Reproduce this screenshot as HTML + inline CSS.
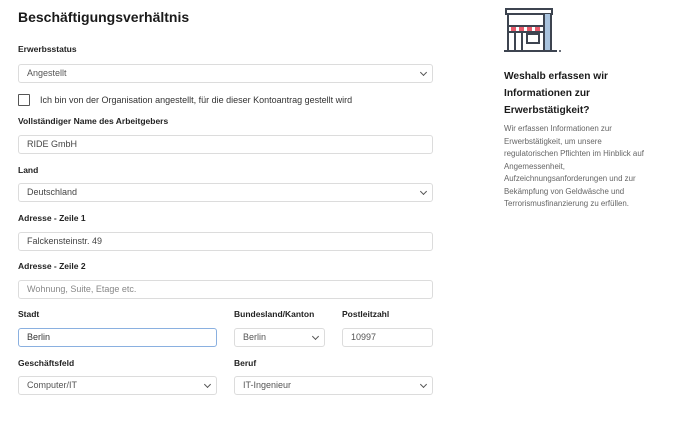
<!DOCTYPE html><html><head><meta charset="utf-8"><style>
body{margin:0;width:686px;height:422px;background:#fff;font-family:"Liberation Sans",sans-serif;color:#222;position:relative;overflow:hidden}
.a{position:absolute}
.t{left:18px;top:9px;font-size:14px;font-weight:bold;color:#1a1a1a}
.l{position:absolute;left:18px;font-size:8.5px;font-weight:bold;color:#222}
.i{position:absolute;box-sizing:border-box;border:1px solid #dcdcdc;border-radius:3px;height:19px;font-size:9px;color:#555;padding-left:8px;line-height:17px}
.c::after{content:"";position:absolute;right:6px;top:5px;width:4px;height:4px;border-right:1px solid #555;border-bottom:1px solid #555;transform:rotate(45deg)}
.r{position:absolute;left:504px;width:170px}
</style></head><body>
<div class="a t">Beschäftigungsverhältnis</div>
<div class="l" style="top:44px">Erwerbsstatus</div>
<div class="i c" style="left:18px;top:64px;width:415px">Angestellt</div>
<div class="a" style="left:18px;top:94px;width:12px;height:12px;border:1px solid #555;box-sizing:border-box;border-radius:1px"></div>
<div class="a" style="left:40px;top:95px;font-size:9px;color:#333">Ich bin von der Organisation angestellt, für die dieser Kontoantrag gestellt wird</div>
<div class="l" style="top:116px">Vollständiger Name des Arbeitgebers</div>
<div class="i" style="left:18px;top:135px;width:415px;color:#444">RIDE GmbH</div>
<div class="l" style="top:165px">Land</div>
<div class="i c" style="left:18px;top:183px;width:415px;color:#444">Deutschland</div>
<div class="l" style="top:213px">Adresse - Zeile 1</div>
<div class="i" style="left:18px;top:232px;width:415px;color:#444">Falckensteinstr. 49</div>
<div class="l" style="top:261px">Adresse - Zeile 2</div>
<div class="i" style="left:18px;top:280px;width:415px;color:#888">Wohnung, Suite, Etage etc.</div>
<div class="l" style="top:309px">Stadt</div>
<div class="i" style="left:18px;top:328px;width:199px;border-color:#8ab0e0;color:#333">Berlin</div>
<div class="l" style="top:309px;left:234px">Bundesland/Kanton</div>
<div class="i c" style="left:234px;top:328px;width:91px">Berlin</div>
<div class="l" style="top:309px;left:342px">Postleitzahl</div>
<div class="i" style="left:342px;top:328px;width:91px">10997</div>
<div class="l" style="top:358px">Geschäftsfeld</div>
<div class="i c" style="left:18px;top:376px;width:199px">Computer/IT</div>
<div class="l" style="top:358px;left:234px">Beruf</div>
<div class="i c" style="left:234px;top:376px;width:199px">IT-Ingenieur</div>
<svg class="a" style="left:500px;top:4px" width="66" height="52" viewBox="0 0 66 52">
<g fill="none" stroke="#3d4450" stroke-width="2">
<rect x="6" y="5" width="46" height="5" fill="#fff"/>
<rect x="44" y="10" width="6" height="37" fill="#a9c3de" stroke="none"/>
<line x1="8" y1="10" x2="8" y2="47"/><line x1="51" y1="10" x2="51" y2="47"/><line x1="44" y1="10" x2="44" y2="47"/>
<rect x="8" y="22" width="36" height="6"/>
<line x1="15" y1="28" x2="15" y2="47"/><line x1="22" y1="28" x2="22" y2="47"/>
<rect x="27" y="30" width="12" height="9"/>
<line x1="4" y1="47" x2="57" y2="47"/>
</g>
<g fill="#e85a6a"><rect x="11" y="23" width="5" height="4"/><rect x="19" y="23" width="5" height="4"/><rect x="27" y="23" width="5" height="4"/><rect x="35" y="23" width="5" height="4"/></g>
<circle cx="60" cy="47" r="1" fill="#3d4450"/>
</svg>
<div class="r" style="top:68px;font-size:10.2px;font-weight:bold;line-height:17px;color:#1a1a1a">Weshalb erfassen wir<br>Informationen zur<br>Erwerbstätigkeit?</div>
<div class="r" style="top:123px;font-size:7.9px;line-height:12.5px;color:#666">Wir erfassen Informationen zur<br>Erwerbstätigkeit, um unsere<br>regulatorischen Pflichten im Hinblick auf<br>Angemessenheit,<br>Aufzeichnungsanforderungen und zur<br>Bekämpfung von Geldwäsche und<br>Terrorismusfinanzierung zu erfüllen.</div>
</body></html>
